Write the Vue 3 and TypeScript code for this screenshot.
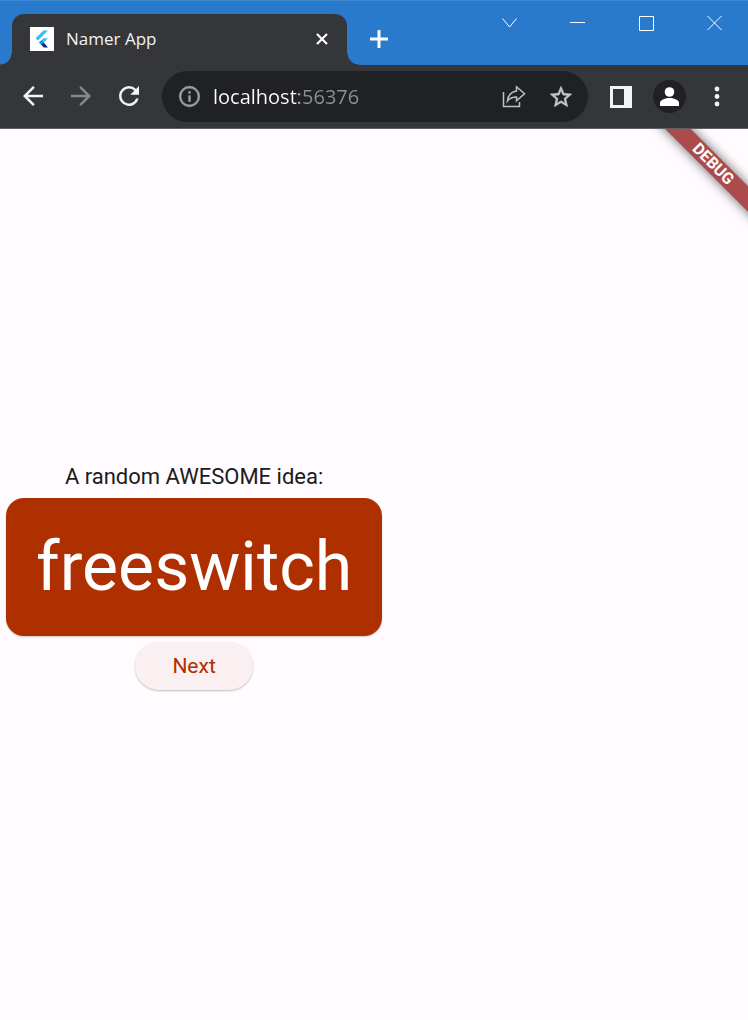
<script setup lang="ts">
import { ref } from 'vue'

const address = ref('localhost:56376')
const words = ['freeswitch', 'bluestone', 'nightowl', 'quickstep']
const index = ref(0)

function next(): void {
  index.value = (index.value + 1) % words.length
}
</script>

<template>
  <div class="window">
    <header class="titlebar">
      <div class="tab">
        <svg class="favicon" viewBox="0 0 24 24" aria-hidden="true">
          <rect width="24" height="24" fill="#fff" />
          <path d="M13.500 3.500h4.500L8 13.500 5.500 11.200z" fill="#35c0f5" />
          <path d="M13.500 11.200H18l-4.200 4.300-2.600 2.300-2.200-2.300z" fill="#35c0f5" />
          <path d="M9 15.500l2.500-2.200 2.500 2.200-2.500 2.500z" fill="#1b95dd" />
          <path d="M11.200 17.800l2.600-2.300 4.200 5h-4.300z" fill="#0b2f8c" />
        </svg>
        <span class="tab-title">Namer App</span>
        <button class="tab-close" type="button" aria-label="Close tab">
          <svg viewBox="0 0 12 12"><path d="M1 1l10 10M11 1L1 11" stroke="#fff" stroke-width="2.200" /></svg>
        </button>
      </div>
      <button class="new-tab" type="button" aria-label="New tab">
        <svg viewBox="0 0 18 18"><path d="M9 1v16M1 9h16" stroke="#fff" stroke-width="3" stroke-linecap="round" /></svg>
      </button>
      <div class="window-controls">
        <button type="button" aria-label="Search tabs">
          <svg viewBox="0 0 16 16"><path d="M.5 3.500l7 8.500 7-8.500" /></svg>
        </button>
        <button type="button" aria-label="Minimize">
          <svg viewBox="0 0 16 16"><path d="M0 7.500h15" /></svg>
        </button>
        <button type="button" aria-label="Maximize">
          <svg viewBox="0 0 16 16"><path d="M1.500 1.500h14v14h-14z" /></svg>
        </button>
        <button type="button" aria-label="Close">
          <svg viewBox="0 0 16 16"><path d="M1.500 1l14 14M15.500 1l-14 14" /></svg>
        </button>
      </div>
    </header>

    <nav class="toolbar" aria-label="Browser toolbar">
      <div class="history">
        <button type="button" aria-label="Back">
          <svg viewBox="0 0 24 24" fill="#f1f3f4"><path d="M20 11H7.830l5.590-5.590L12 4l-8 8 8 8 1.410-1.410L7.830 13H20v-2z" /></svg>
        </button>
        <button type="button" aria-label="Forward">
          <svg viewBox="0 0 24 24" fill="#87888b"><path d="M12 4l-1.410 1.410L16.170 11H4v2h12.170l-5.580 5.590L12 20l8-8z" /></svg>
        </button>
        <button type="button" aria-label="Reload">
          <svg viewBox="0 0 24 24" fill="#f1f3f4"><path d="M17.650 6.350A7.958 7.958 0 0 0 12 4a8 8 0 1 0 7.730 10h-2.080A6 6 0 1 1 12 6c1.660 0 3.140.690 4.220 1.780L13 11h7V4l-2.350 2.350z" /></svg>
        </button>
      </div>
      <div class="omnibox">
        <button class="info" type="button" aria-label="View site information">
          <svg viewBox="0 0 24 24" fill="#9aa0a6"><path d="M11 17h2v-6h-2v6zm1-15a10 10 0 1 0 0 20 10 10 0 0 0 0-20zm0 18a8 8 0 1 1 0-16 8 8 0 0 1 0 16zM11 9h2V7h-2v2z" stroke="#9aa0a6" stroke-width=".3" /></svg>
        </button>
        <input v-model="address" class="address" type="text" aria-label="Address" spellcheck="false" />
        <button class="share" type="button" aria-label="Share this page">
          <svg viewBox="0 0 24 24" fill="none" stroke="#bdc1c6" stroke-width="1.500">
            <path d="M1.500 7v14.500h16V17" />
            <path d="M14.500 1.800l8 7-8 7V12c-4 0-6.800 1-9 4 .5-5 3.500-9 9-10z" />
          </svg>
        </button>
        <button class="star" type="button" aria-label="Bookmark this tab">
          <svg viewBox="0 0 24 24" fill="#c5c8cb" stroke="#c5c8cb" stroke-width=".5"><path d="M22 9.240l-7.190-.620L12 2 9.190 8.630 2 9.240l5.460 4.730L5.820 21 12 17.270 18.180 21l-1.630-7.030L22 9.240zM12 15.400l-3.760 2.270 1-4.280-3.320-2.880 4.380-.380L12 6.100l1.710 4.040 4.380.380-3.320 2.880 1 4.280L12 15.400z" /></svg>
        </button>
      </div>
      <div class="actions">
        <button class="panel" type="button" aria-label="Side panel">
          <svg viewBox="0 0 22 22"><path fill="#f1f3f4" fill-rule="evenodd" d="M0 0h22v22H0zM3 3v16h11V3z" /></svg>
        </button>
        <button class="profile" type="button" aria-label="Profile">
          <svg viewBox="0 0 33 33">
            <circle cx="16.500" cy="16.500" r="16.500" fill="#202124" />
            <circle cx="16.500" cy="12" r="4.800" fill="#fff" />
            <path d="M7 26v-3c0-3.500 6-5 9.500-5s9.500 1.500 9.500 5v3z" fill="#fff" />
          </svg>
        </button>
        <button class="menu" type="button" aria-label="Menu">
          <svg viewBox="0 0 20 24" fill="#f1f3f4">
            <circle cx="10" cy="4" r="2.400" />
            <circle cx="10" cy="11.500" r="2.400" />
            <circle cx="10" cy="19" r="2.400" />
          </svg>
        </button>
      </div>
    </nav>

    <main class="page">
      <div class="idea">
        <p class="caption">A random AWESOME idea:</p>
        <div class="card">{{ words[index] }}</div>
        <button class="next" type="button" @click="next">Next</button>
      </div>
      <div class="banner"><span>DEBUG</span></div>
    </main>
  </div>
</template>

<style>
body {
  margin: 0;
  background: #fffbff;
}
</style>

<style scoped>
.window {
  display: flex;
  flex-direction: column;
  min-height: 100vh;
  font-family: "Open Sans", "Noto Sans", sans-serif;
}

button {
  display: flex;
  align-items: center;
  justify-content: center;
  flex: none;
  padding: 0;
  border: 0;
  background: none;
  cursor: pointer;
}

svg {
  display: block;
}

.titlebar {
  display: flex;
  align-items: flex-end;
  height: 65px;
  box-sizing: border-box;
  padding-left: 12px;
  border-top: 1px solid #3d87d3;
  background: #2979cd;
}

.tab {
  position: relative;
  display: flex;
  align-items: center;
  flex: 0 1 335px;
  height: 51px;
  box-sizing: border-box;
  padding: 0 19px 2px 18px;
  border-radius: 12px 12px 0 0;
  background: #35363a;
}

.tab::before,
.tab::after {
  content: "";
  position: absolute;
  bottom: 0;
  width: 12px;
  height: 12px;
}

.tab::before {
  right: 100%;
  background: radial-gradient(circle at 0 0, transparent 11px, #35363a 12px);
}

.tab::after {
  left: 100%;
  background: radial-gradient(circle at 100% 0, transparent 11px, #35363a 12px);
}

.favicon {
  width: 24px;
  height: 24px;
}

.tab-title {
  flex: 1;
  margin-left: 12px;
  color: #f1f3f4;
  font-size: 17px;
  line-height: 24px;
  white-space: nowrap;
}

.tab-close svg {
  width: 12px;
  height: 12px;
}

.new-tab {
  width: 24px;
  height: 51px;
  margin-left: 20px;
  padding-bottom: 2px;
}

.new-tab svg {
  width: 18px;
  height: 18px;
}

.window-controls {
  display: flex;
  align-self: flex-start;
  margin-left: auto;
}

.window-controls button {
  width: 68px;
  height: 44px;
}

.window-controls svg {
  width: 16px;
  height: 16px;
  fill: none;
  stroke: #fff;
}

.toolbar {
  display: flex;
  align-items: center;
  padding: 6px 21px 6px 18px;
  border-bottom: 1px solid #5f6063;
  background: #35363a;
}

.history {
  display: flex;
  gap: 18px;
  padding-bottom: 1px;
}

.history svg {
  width: 30px;
  height: 30px;
}

.omnibox {
  display: flex;
  align-items: center;
  flex: 1;
  min-width: 0;
  height: 51px;
  box-sizing: border-box;
  margin: 0 22px 0 18px;
  padding: 0 14px 0 15px;
  border-radius: 26px;
  background: #202124;
}

.info svg {
  width: 25px;
  height: 25px;
}

.address {
  flex: 1;
  min-width: 0;
  margin: 0 12px 0 11px;
  padding: 0;
  border: 0;
  outline: 0;
  background: linear-gradient(to right, #fff 86px, #8d9094 86px);
  background-clip: text;
  color: transparent;
  caret-color: #fff;
  font-family: inherit;
  font-size: 20px;
  line-height: 28px;
}

.share {
  margin-right: 22px;
}

.share svg {
  width: 24px;
  height: 24px;
}

.star svg {
  width: 26px;
  height: 26px;
}

.actions {
  display: flex;
  align-items: center;
  gap: 21px;
}

.panel svg {
  width: 22px;
  height: 22px;
}

.profile svg {
  width: 33px;
  height: 33px;
}

.menu svg {
  width: 20px;
  height: 24px;
}

.page {
  position: relative;
  display: flex;
  align-items: center;
  flex: 1;
  padding-top: 2px;
  background: #fffbff;
  font-family: Roboto, sans-serif;
}

.idea {
  display: flex;
  flex-direction: column;
  align-items: center;
  gap: 6px;
  padding: 0 6px;
}

.caption {
  margin: 0;
  color: #201a18;
  font-size: 22px;
  line-height: 30px;
}

.card {
  padding: 30px;
  border-radius: 18px;
  background: #ae2f00;
  box-shadow: 0 1px 2px rgba(0, 0, 0, 0.2);
  color: #fff;
  font-size: 68px;
  line-height: 78px;
}

.next {
  height: 48px;
  padding: 0 37px;
  border-radius: 24px;
  background: #faf0f1;
  box-shadow: 0 1px 2px rgba(0, 0, 0, 0.25);
  color: #ae2f00;
  font-family: inherit;
  font-size: 21px;
  line-height: 30px;
}

.banner {
  position: absolute;
  top: 0;
  right: 0;
  width: 112px;
  height: 112px;
  overflow: hidden;
  pointer-events: none;
}

.banner span {
  position: absolute;
  top: 26px;
  left: -3px;
  width: 160px;
  transform: rotate(45deg);
  background: #ad4a4c;
  box-shadow: 0 0 12px rgba(0, 0, 0, 0.6);
  color: #fff;
  font-size: 16px;
  font-weight: 700;
  line-height: 18px;
  text-align: center;
}
</style>
